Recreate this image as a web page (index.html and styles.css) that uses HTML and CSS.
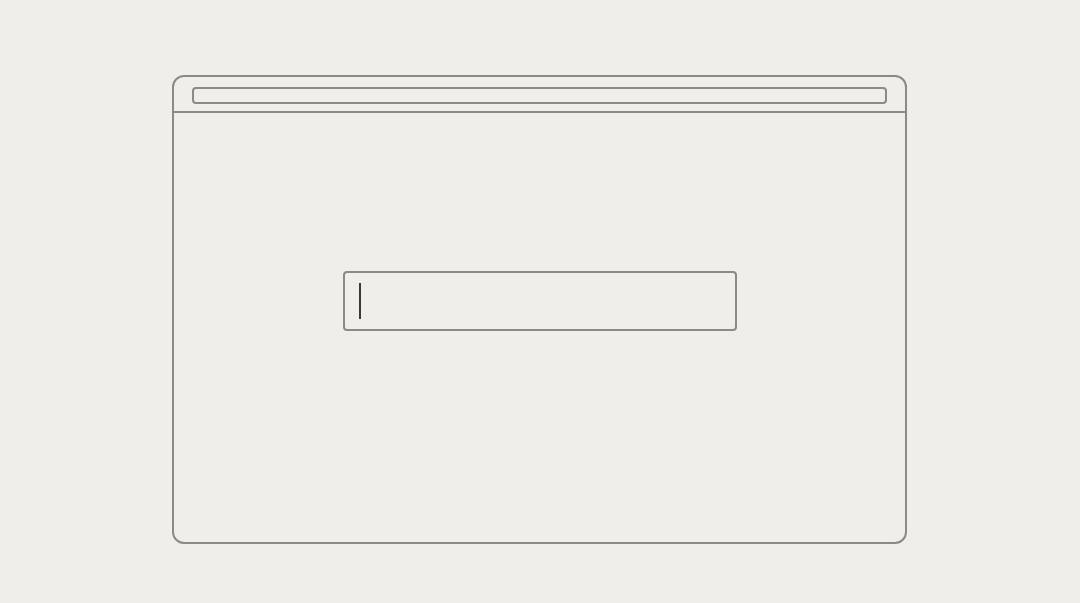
FILE: index.html
```html
<!DOCTYPE html>
<html lang="en">
<head>
<meta charset="utf-8">
<title>Window</title>
<link rel="stylesheet" href="styles.css">
</head>
<body>
<div class="stage">
  <div class="window">
    <div class="titlebar">
      <div class="addressbar"></div>
    </div>
    <div class="content">
      <div class="input"><span class="caret"></span></div>
    </div>
  </div>
</div>
</body>
</html>
```
FILE: styles.css
```css
html, body {
  margin: 0;
  padding: 0;
  background: #efeeeb;
  font-family: "Liberation Sans", Arial, sans-serif;
}
.stage {
  width: 1080px;
  height: 603px;
  display: flex;
  justify-content: center;
  padding-top: 75px;
  box-sizing: border-box;
}
.window {
  width: 735px;
  height: 469px;
  box-sizing: border-box;
  border: 2px solid #8b8a88;
  border-radius: 12px;
  display: flex;
  flex-direction: column;
  margin-left: -1px;
}
.titlebar {
  height: 36px;
  box-sizing: border-box;
  border-bottom: 2px solid #8b8a88;
  padding: 10px 18px 0;
}
.addressbar {
  height: 17px;
  box-sizing: border-box;
  border: 2px solid #8b8a88;
  border-radius: 4px;
}
.content {
  flex: 1;
  display: flex;
  justify-content: center;
  align-items: flex-start;
  padding-top: 158px;
}
.input {
  width: 394px;
  height: 60px;
  box-sizing: border-box;
  border: 2px solid #8b8a88;
  border-radius: 4px;
  padding: 10px 14px;
  display: flex;
}
.caret {
  width: 2px;
  height: 36px;
  background: #3a3a38;
}
```
